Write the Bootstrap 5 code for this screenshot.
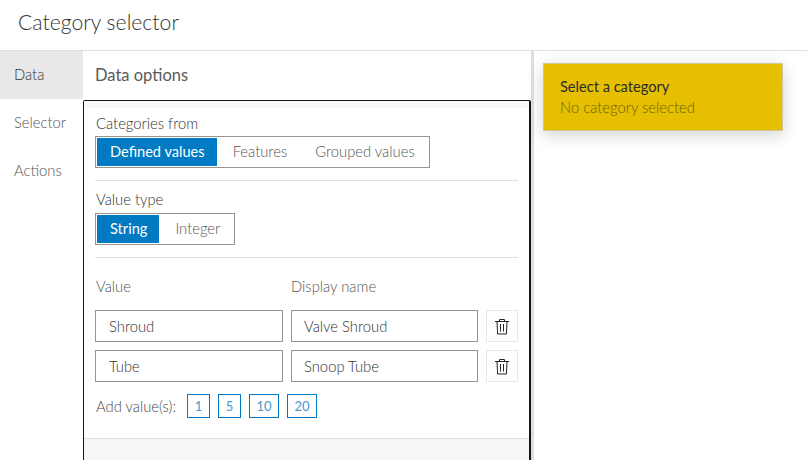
<!DOCTYPE html>
<html lang="en">
<head>
    <meta charset="UTF-8">
    <meta name="viewport" content="width=device-width, initial-scale=1.0">
    <title>Category selector</title>
    <link href="https://cdn.jsdelivr.net/npm/bootstrap@5.3.3/dist/css/bootstrap.min.css" rel="stylesheet">
    <style>
        html, body { height: 460px; overflow: hidden; }
        body { font-family: Lato, "Noto Sans", sans-serif; font-size: 14.8px; font-weight: 300; color: #5a5a5a; background: #fff; }
        .app-head { height: 51px; border-bottom: 1px solid #e0e0e0; padding: 9px 18px 0; font-size: 21.2px; line-height: 26px; color: #323232; }
        .app-body { height: 409px; }
        .side-tabs { width: 83px; flex: none; }
        .side-tab { height: 48px; line-height: 46px; padding-left: 14px; color: #555; }
        .side-tab.is-on { background: #e8e8e8; color: #323232; line-height: 47px; }
        .settings { width: 451px; flex: none; border-right: 3px solid #dfdfdf; }
        .settings-title { height: 49px; line-height: 48px; padding-left: 12px; font-size: 16.5px; font-weight: 400; color: #5a5a5a; }
        .outline-box { width: 448px; height: 360px; border: 2px solid #151515; border-bottom: 0; border-radius: 2px 2px 0 0; border-top-width: 1px; border-left-width: 1px; }
        .strip { height: 7px; background: #f8f8f8; }
        .box-body { padding: 7px 11px 0 11px; height: 330px; }
        .field-label { line-height: 16px; color: #323232; margin-bottom: 5px; padding-left: 1px; }
        .seg { display: inline-flex; border: 1px solid #959595; padding: 1px; height: 32px; vertical-align: top; }
        .seg-item { padding: 0 14px; line-height: 27px; color: #555; }
        .seg-item:last-child { padding-right: 13px; }
        .seg-item.is-on { background: #007ac2; color: #fff; padding: 0 12px 0 13px; margin-right: 2px; font-weight: 400; font-size: 14.6px; }
        .hr-line { height: 1px; background: #dfdfdf; }
        .hr-a { margin: 12px 0 10px; }
        .hr-b { margin-top: 12px; }
        .field-label.is-second { margin-bottom: 6px; }
        .val-labels { margin: 19px 0 15px; padding-left: 1px; }
        .val-label { width: 195px; color: #555; line-height: 18px; }
        .val-input { height: 32px; border: 1px solid #959595; line-height: 30px; padding-left: 12px; color: #323232; }
        .val-a { width: 188px; padding-left: 13px; }
        .val-b { width: 187px; }
        .trash-btn { width: 32px; height: 32px; border: 1px solid #e8e8e8; }
        .add-row { margin-top: 12px; padding-left: 1px; }
        .add-text { width: 83px; color: #4a4a4a; }
        .add-btn { height: 24px; width: 23px; border: 1px solid #007ac2; color: #4a97cf; font-size: 13px; font-weight: 400; line-height: 22px; text-align: center; }
        .add-btn.is-wide { width: 30px; }
        .box-foot { height: 22px; background: #f6f6f6; border-top: 1px solid #dfdfdf; }
        .preview { padding: 12px 0 0 9px; }
        .cat-card { width: 240px; height: 68px; background: #e6bf00; border: 1px solid #cfc79a; padding: 12px 16px; box-shadow: 0 4px 16px rgba(0,0,0,.18); line-height: 21px; }
        .cat-title { color: #2b2b2b; font-weight: 400; font-size: 14.6px; }
        .cat-sub { color: #6f5e08; }
    </style>
</head>
<body>
    <div class="app-head">Category selector</div>
    <div class="app-body d-flex">
        <div class="side-tabs">
            <div class="side-tab is-on">Data</div>
            <div class="side-tab">Selector</div>
            <div class="side-tab">Actions</div>
        </div>
        <div class="settings">
            <div class="settings-title">Data options</div>
            <div class="outline-box">
                <div class="strip"></div>
                <div class="box-body">
                    <div class="field-label">Categories from</div>
                    <div class="seg">
                        <div class="seg-item is-on">Defined values</div>
                        <div class="seg-item">Features</div>
                        <div class="seg-item">Grouped values</div>
                    </div>
                    <div class="hr-line hr-a"></div>
                    <div class="field-label is-second">Value type</div>
                    <div class="seg">
                        <div class="seg-item is-on">String</div>
                        <div class="seg-item">Integer</div>
                    </div>
                    <div class="hr-line hr-b"></div>
                    <div class="d-flex val-labels">
                        <div class="val-label">Value</div>
                        <div class="val-label">Display name</div>
                    </div>
                    <div class="d-flex gap-2 mb-2">
                        <div class="val-input val-a">Shroud</div>
                        <div class="val-input val-b">Valve Shroud</div>
                        <div class="trash-btn d-flex align-items-center justify-content-center">
                            <svg width="16" height="17" viewBox="0 0 16 17" fill="none" stroke="#222" stroke-width="1"><path d="M1 3.5h14M5.500 3.500V1.500h5v2M3 3.500l.6 12.500h8.800l.6-12.500M6.500 6v7.500M9.500 6v7.500"/></svg>
                        </div>
                    </div>
                    <div class="d-flex gap-2">
                        <div class="val-input val-a">Tube</div>
                        <div class="val-input val-b">Snoop Tube</div>
                        <div class="trash-btn d-flex align-items-center justify-content-center">
                            <svg width="16" height="17" viewBox="0 0 16 17" fill="none" stroke="#222" stroke-width="1"><path d="M1 3.5h14M5.500 3.500V1.500h5v2M3 3.500l.6 12.500h8.800l.6-12.500M6.500 6v7.500M9.500 6v7.500"/></svg>
                        </div>
                    </div>
                    <div class="d-flex align-items-center gap-2 add-row">
                        <span class="add-text">Add value(s):</span>
                        <div class="add-btn">1</div>
                        <div class="add-btn">5</div>
                        <div class="add-btn is-wide">10</div>
                        <div class="add-btn is-wide">20</div>
                    </div>
                </div>
                <div class="box-foot"></div>
            </div>
        </div>
        <div class="preview">
            <div class="cat-card">
                <div class="cat-title">Select a category</div>
                <div class="cat-sub">No category selected</div>
            </div>
        </div>
    </div>
    <script src="https://cdn.jsdelivr.net/npm/bootstrap@5.3.3/dist/js/bootstrap.bundle.min.js"></script>
</body>
</html>
